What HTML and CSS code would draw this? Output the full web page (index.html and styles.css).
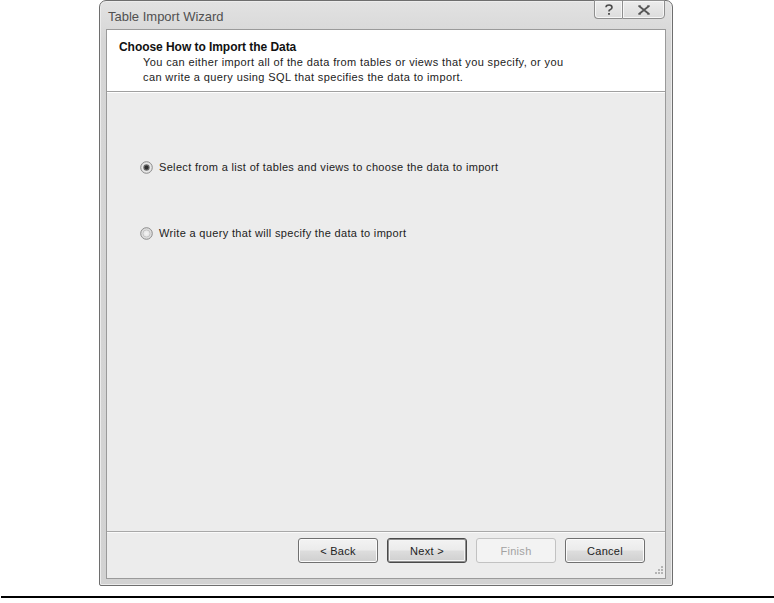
FILE: index.html
```html
<!DOCTYPE html>
<html>
<head>
<meta charset="utf-8">
<link rel="stylesheet" href="styles.css">
</head>
<body>
<div class="page">
  <div class="window">
    <div class="titlebar">
      <span class="title">Table Import Wizard</span>
      <div class="caption-buttons">
        <div class="cap-btn help">
          <svg width="10" height="12" viewBox="0 0 10 12">
            <path d="M2 3.2 C2 1.6 3.4 1 5 1 C6.8 1 8 2 8 3.4 C8 4.8 6.8 5.2 5.6 6 C5.1 6.3 5 6.7 5 7.6" fill="none" stroke="#4a4a4a" stroke-width="1.6"/>
            <rect x="4.1" y="9" width="1.8" height="1.8" fill="#4a4a4a"/>
          </svg>
        </div>
        <div class="cap-btn close">
          <svg width="14" height="10" viewBox="0 0 14 10">
            <path d="M2 1 L12 9 M12 1 L2 9" stroke="#555" stroke-width="1.8"/>
            <path d="M1 1 H4 M10 1 H13 M1 9 H4 M10 9 H13" stroke="#555" stroke-width="1.2"/>
          </svg>
        </div>
      </div>
    </div>
    <div class="client">
      <div class="header">
        <div class="h-title">Choose How to Import the Data</div>
        <div class="h-desc">You can either import all of the data from tables or views that you specify, or you<br>can write a query using SQL that specifies the data to import.</div>
      </div>
      <div class="content">
        <div class="radio-row first">
          <svg class="radio" width="13" height="13" viewBox="0 0 13 13">
            <defs>
              <radialGradient id="rg1" cx="50%" cy="50%" r="60%">
                <stop offset="0" stop-color="#ffffff"/>
                <stop offset="1" stop-color="#d8d8d8"/>
              </radialGradient>
            </defs>
            <circle cx="6.5" cy="6.5" r="5.8" fill="url(#rg1)" stroke="#8c8c8c" stroke-width="1"/>
            <circle cx="6.5" cy="6.5" r="3.2" fill="#6a6a6a"/>
            <circle cx="6.5" cy="6.5" r="2" fill="#2e2e2e"/>
          </svg>
          <span>Select from a list of tables and views to choose the data to import</span>
        </div>
        <div class="radio-row second">
          <svg class="radio" width="13" height="13" viewBox="0 0 13 13">
            <defs>
              <radialGradient id="rg2" cx="50%" cy="50%" r="60%">
                <stop offset="0" stop-color="#f4f4f4"/>
                <stop offset="1" stop-color="#d4d4d4"/>
              </radialGradient>
            </defs>
            <circle cx="6.5" cy="6.5" r="5.8" fill="url(#rg2)" stroke="#8c8c8c" stroke-width="1"/>
            <circle cx="6.5" cy="6.5" r="3.6" fill="none" stroke="#c4c4c4" stroke-width="1"/>
          </svg>
          <span>Write a query that will specify the data to import</span>
        </div>
      </div>
      <div class="footer">
        <div class="btn">&lt; Back</div>
        <div class="btn default">Next &gt;</div>
        <div class="btn disabled">Finish</div>
        <div class="btn">Cancel</div>
        <svg class="grip" width="11" height="11" viewBox="0 0 11 11">
          <g fill="#b4b4b4">
            <rect x="8" y="0" width="2" height="2"/>
            <rect x="5" y="3" width="2" height="2"/>
            <rect x="8" y="3" width="2" height="2"/>
            <rect x="2" y="6" width="2" height="2"/>
            <rect x="5" y="6" width="2" height="2"/>
            <rect x="8" y="6" width="2" height="2"/>
          </g>
        </svg>
      </div>
    </div>
  </div>
  <div class="rule"></div>
</div>
</body>
</html>
```

FILE: styles.css
```css
* { box-sizing: border-box; }

html, body {
  margin: 0;
  padding: 0;
  background: #ffffff;
}

.page {
  width: 774px;
  height: 603px;
  font-family: "Liberation Sans", Arial, sans-serif;
}

.window {
  margin-left: 99px;
  width: 574px;
  height: 586px;
  border: 1px solid #6e6e6e;
  border-radius: 7px 7px 2px 2px;
  background: linear-gradient(#e2e2e2, #d6d6d6 40px, #d2d2d2);
  padding: 0 6px 6px 6px;
  display: flex;
  flex-direction: column;
  box-shadow: inset 0 0 0 1px #ececec;
}

.titlebar {
  height: 28px;
  display: flex;
  justify-content: space-between;
  align-items: flex-start;
  padding-left: 2px;
}

.title {
  font-size: 13px;
  color: #505050;
  margin-top: 8px;
  line-height: 15px;
}

.caption-buttons {
  display: flex;
  margin-right: 1px;
  margin-top: -1px;
}

.cap-btn {
  height: 19px;
  display: flex;
  align-items: center;
  justify-content: center;
  border: 1px solid #8e8e8e;
  background: linear-gradient(#ececec, #dcdcdc);
  box-shadow: inset 0 0 0 1px #f6f6f6;
}

.cap-btn.help {
  width: 28px;
  border-radius: 0 0 0 4px;
  border-right: none;
}

.cap-btn.close {
  width: 43px;
  border-radius: 0 0 4px 0;
}

.client {
  flex: 1;
  border: 1px solid #9a9a9a;
  background: #ececec;
  display: flex;
  flex-direction: column;
  position: relative;
}

.header {
  height: 62px;
  background: #ffffff;
  border-bottom: 1px solid #a0a0a0;
  box-shadow: 0 1px 0 #ffffff;
  padding: 10px 0 0 12px;
  line-height: 15px;
  color: #111;
}

.h-title {
  font-size: 12px;
  font-weight: bold;
  letter-spacing: -0.05px;
}

.h-desc {
  font-size: 11px;
  padding-left: 24px;
  color: #222;
  letter-spacing: 0.38px;
}

.content {
  flex: 1;
  display: flex;
  flex-direction: column;
  padding-left: 33px;
  font-size: 11px;
  color: #222;
  letter-spacing: 0.33px;
}

.radio-row {
  display: flex;
  align-items: center;
  gap: 6px;
  height: 16px;
}

.radio-row.first { margin-top: 67px; }
.radio-row.second { margin-top: 50px; }

.footer {
  height: 47px;
  border-top: 1px solid #a8a8a8;
  box-shadow: inset 0 1px 0 #fafafa;
  display: flex;
  justify-content: flex-end;
  align-items: flex-start;
  gap: 9px;
  padding: 6px 20px 0 0;
}

.btn {
  width: 80px;
  height: 25px;
  border: 1px solid #707070;
  border-radius: 3px;
  background: linear-gradient(#f3f3f3 0%, #ebebeb 48%, #dddddd 52%, #cfcfcf 100%);
  box-shadow: inset 0 0 0 1px #fbfbfb;
  font-size: 11px;
  color: #222;
  letter-spacing: 0.3px;
  display: flex;
  align-items: center;
  justify-content: center;
}

.btn.default {
  border-color: #4a4a4a;
  box-shadow: inset 0 0 0 1px #8f8f8f, inset 0 0 0 2px #f4f4f4;
}

.btn.disabled {
  border-color: #c2c2c2;
  background: #f3f3f3;
  box-shadow: none;
  color: #a2a2a2;
}

.grip {
  position: absolute;
  right: 1px;
  bottom: 1px;
}

.rule {
  margin-top: 10px;
  margin-left: 1px;
  height: 2px;
  background: #000;
}
```
